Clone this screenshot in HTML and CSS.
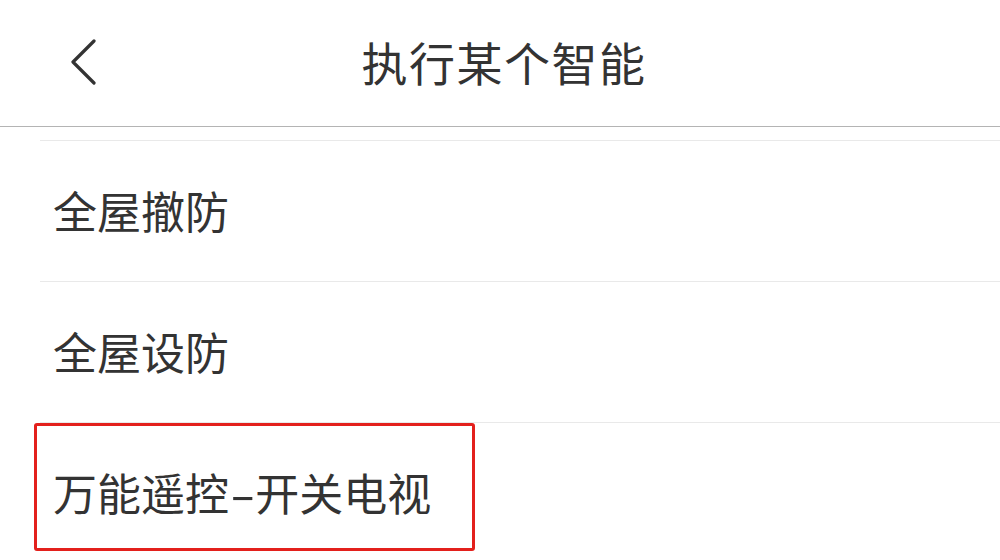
FILE: index.html
```html
<!DOCTYPE html>
<html lang="zh-CN">
<head>
<meta charset="utf-8">
<title>执行某个智能</title>
<link rel="stylesheet" href="styles.css">
</head>
<body>
  <header class="topbar">
    <div class="back">
      <svg width="30" height="46" viewBox="0 0 30 46" aria-hidden="true">
        <path d="M25 2 L4 23 L25 44" fill="none" stroke="#333" stroke-width="3.2" stroke-linecap="round" stroke-linejoin="round"/>
      </svg>
    </div>
    <h1 class="title">执行某个智能</h1>
    <div class="spacer"></div>
  </header>
  <ul class="list">
    <li class="row">全屋撤防</li>
    <li class="row">全屋设防</li>
    <li class="row highlighted">万能遥控<span class="dash">-</span>开关电视<span class="mark"></span></li>
  </ul>
</body>
</html>
```

FILE: styles.css
```css
html, body {
  margin: 0;
  padding: 0;
  background: #ffffff;
  font-family: "Noto Sans CJK SC", "Noto Sans", sans-serif;
  color: #333333;
  overflow: hidden;
}

.topbar {
  height: 126px;
  border-bottom: 1px solid #b4b4b4;
  display: grid;
  grid-template-columns: 1fr auto 1fr;
  align-items: center;
}

.back {
  padding-left: 69px;
  display: flex;
  align-items: center;
  padding-bottom: 2px;
}

.title {
  margin: 0;
  font-size: 46px;
  font-weight: 400;
  letter-spacing: 1.5px;
  line-height: 1;
  padding-left: 8px;
  padding-bottom: 4px;
}

.list {
  list-style: none;
  margin: 0;
  padding: 13px 0 0 40px;
}

.row {
  position: relative;
  height: 138px;
  border-top: 1px solid #e9e9e9;
  display: flex;
  align-items: center;
  padding-left: 13px;
  padding-bottom: 2px;
  font-size: 44px;
  line-height: 1;
}

.dash {
  display: inline-block;
  margin: 0 5px 0 6px;
  transform: scaleX(1.7);
}

.mark {
  position: absolute;
  left: -6px;
  top: 0;
  width: 441px;
  height: 128px;
  box-sizing: border-box;
  border: 3px solid #e3201c;
  border-radius: 3px;
}
```
